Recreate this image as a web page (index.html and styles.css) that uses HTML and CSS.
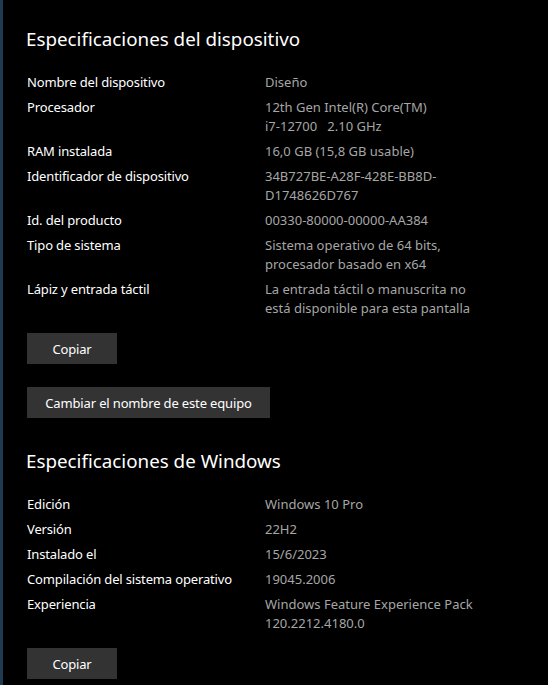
FILE: index.html
```html
<!DOCTYPE html>
<html lang="es">
<head>
  <meta charset="UTF-8">
  <title>Acerca de</title>
  <link rel="stylesheet" href="styles.css">
</head>
<body>

<div class="pagina">
  <h2 class="titulo">Especificaciones del dispositivo</h2>
  <div class="specs">
    <div class="etiqueta">Nombre del dispositivo</div>
    <div class="valor">Diseño</div>
    <div class="etiqueta">Procesador</div>
    <div class="valor">12th Gen Intel(R) Core(TM)<br>i7-12700&nbsp;&nbsp;&nbsp;2.10 GHz</div>
    <div class="etiqueta">RAM instalada</div>
    <div class="valor">16,0 GB (15,8 GB usable)</div>
    <div class="etiqueta">Identificador de dispositivo</div>
    <div class="valor">34B727BE-A28F-428E-BB8D-<br>D1748626D767</div>
    <div class="etiqueta">Id. del producto</div>
    <div class="valor">00330-80000-00000-AA384</div>
    <div class="etiqueta">Tipo de sistema</div>
    <div class="valor">Sistema operativo de 64 bits,<br>procesador basado en x64</div>
    <div class="etiqueta">Lápiz y entrada táctil</div>
    <div class="valor">La entrada táctil o manuscrita no<br>está disponible para esta pantalla</div>
  </div>
  <button class="boton boton-copiar">Copiar</button>
  <button class="boton boton-renombrar">Cambiar el nombre de este equipo</button>

  <h2 class="titulo titulo-windows">Especificaciones de Windows</h2>
  <div class="specs">
    <div class="etiqueta">Edición</div>
    <div class="valor">Windows 10 Pro</div>
    <div class="etiqueta">Versión</div>
    <div class="valor">22H2</div>
    <div class="etiqueta">Instalado el</div>
    <div class="valor">15/6/2023</div>
    <div class="etiqueta">Compilación del sistema operativo</div>
    <div class="valor">19045.2006</div>
    <div class="etiqueta">Experiencia</div>
    <div class="valor">Windows Feature Experience Pack<br>120.2212.4180.0</div>
  </div>
  <button class="boton boton-copiar">Copiar</button>
</div>

</body>
</html>
```

FILE: styles.css
```css
    body {
      margin: 0;
      padding: 0;
      background: #000;
      color: #fff;
      font-family: "Noto Sans", "Liberation Sans", sans-serif;
      font-size: 13px;
      letter-spacing: -0.15px;
    }
    .pagina {
      min-height: 100vh;
      box-sizing: border-box;
      border-left: 3px solid #1f3b51;
      padding: 25px 0 0 23px;
      display: flex;
      flex-direction: column;
      align-items: flex-start;
    }
    .titulo {
      margin: 0 0 20px 0;
      font-size: 18.8px;
      font-weight: normal;
      line-height: 28px;
      letter-spacing: 0;
    }
    .titulo-windows {
      margin-top: 29px;
    }
    .specs {
      display: grid;
      grid-template-columns: 238px 1fr;
      row-gap: 6px;
      line-height: 19px;
      padding-left: 1px;
    }
    .valor {
      color: #a6a6a6;
      letter-spacing: 0;
    }
    .boton {
      height: 31px;
      padding: 0;
      font: inherit;
      letter-spacing: inherit;
      background: #333;
      color: #fff;
      border: none;
      border-radius: 0;
      cursor: pointer;
      margin-left: 1px;
    }
    .boton-copiar {
      margin-top: 15px;
      width: 90px;
    }
    .boton-renombrar {
      margin-top: 23px;
      width: 243px;
    }
```
